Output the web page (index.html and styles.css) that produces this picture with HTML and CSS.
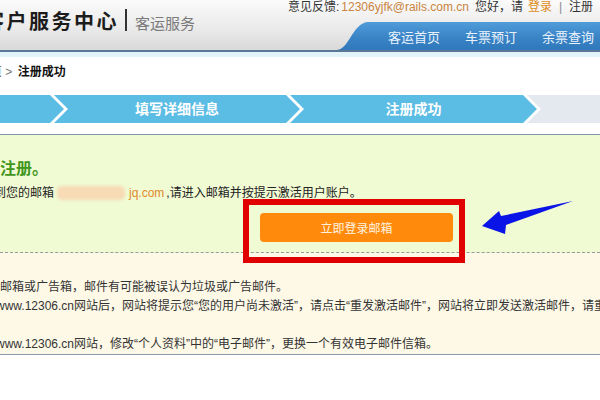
FILE: index.html
```html
<!DOCTYPE html>
<html lang="zh-CN">
<head>
    <meta charset="UTF-8">
    <meta name="viewport" content="width=device-width, initial-scale=1.0">
    <title>注册成功 - 中国铁路客户服务中心</title>
    <link rel="stylesheet" href="styles.css">
</head>
<body>
    <div class="header">
        <div class="logo">
            <span class="logo-name">客户服务中心</span>
            <span class="logo-sep"></span>
            <span class="logo-sub">客运服务</span>
        </div>
        <div class="header-right">
            <div class="top-links">
                <span>意见反馈:</span>
                <a class="mail">12306yjfk@rails.com.cn</a>
                <span>您好，请</span>
                <a class="login">登录</a>
                <span class="bar">|</span>
                <a>注册</a>
            </div>
            <ul class="nav">
                <li>客运首页</li>
                <li>车票预订</li>
                <li>余票查询</li>
                <li>列车时刻</li>
            </ul>
        </div>
    </div>
    <div class="band"></div>

    <div class="crumb"><span class="cut">页</span> <span class="gt">&gt;</span> <b>注册成功</b></div>

    <div class="steps">
        <div class="step step-first"></div>
        <div class="step step-mid">填写详细信息</div>
        <div class="step step-mid">注册成功</div>
        <div class="step step-last"></div>
    </div>

    <div class="result">
        <div class="result-top">
            <h3>注册。</h3>
            <p class="mail-line"><span class="cut-line">到您的邮箱</span><span class="blur"></span><span class="domain">jq.com</span> ,请进入邮箱并按提示激活用户账户。</p>
            <button class="go-mail">立即登录邮箱</button>
        </div>
        <div class="result-tips">
            <p class="cut-line">邮箱或广告箱，邮件有可能被误认为垃圾或广告邮件。</p>
            <p class="cut-w">www.12306.cn网站后，网站将提示您“您的用户尚未激活”，请点击“重发激活邮件”，网站将立即发送激活邮件，请重新登录邮箱激活。</p>
            <p>&nbsp;</p>
            <p class="cut-w">www.12306.cn网站，修改“个人资料”中的“电子邮件”，更换一个有效电子邮件信箱。</p>
        </div>

        <!-- red frame and arrow drawn over the page -->
        <div class="mark"></div>
        <svg class="arrow" width="100" height="42" viewBox="0 0 100 42">
            <polygon points="4,30 21,15 23,20 95,5 28,29 27,38" fill="#0a14e6"/>
        </svg>
    </div>
</body>
</html>
```

FILE: styles.css
```css
body {
    margin: 0;
    width: 600px;
    overflow: hidden;
    font-family: "Liberation Sans", "Noto Sans CJK SC", sans-serif;
    font-size: 12px;
    color: #222;
    background: #fff;
}
a {
    text-decoration: none;
}
.header {
    display: flex;
    height: 50px;
    background: linear-gradient(#fbfbfb, #e9e9e9 60%, #d9d9d9);
    border-bottom: 2px solid #5b7894;
}
.logo {
    flex: none;
    width: 288px;
    display: flex;
    align-items: center;
    height: 40px;
}
.logo-name {
    flex: none;
    margin-left: -16px;
    font-size: 20px;
    font-weight: 700;
    letter-spacing: 2.5px;
    color: #1c1c1c;
    white-space: nowrap;
}
.logo-sep {
    width: 2px;
    height: 22px;
    margin-left: 6px;
    background: #333;
}
.logo-sub {
    margin-left: 8px;
    margin-top: 4px;
    font-size: 15px;
    color: #7a7a7a;
    white-space: nowrap;
}
.header-right {
    flex: 1;
    min-width: 0;
    display: flex;
    flex-direction: column;
}
.top-links {
    display: flex;
    gap: 6px;
    line-height: 14px;
    white-space: nowrap;
    color: #333;
}
.top-links .mail {
    margin-left: -4px;
    color: #c9843e;
}
.top-links .login {
    margin-left: -1px;
    color: #e08c1a;
}
.top-links .bar {
    color: #888;
    margin: 0 1px;
}
.nav {
    display: flex;
    gap: 25px;
    list-style: none;
    margin: 8px 0 0 49px;
    padding: 4px 0 0 51px;
    height: 24px;
    line-height: 24px;
    font-size: 13px;
    color: #eaf3fc;
    white-space: nowrap;
    overflow: hidden;
    background: linear-gradient(#509cd9, #3a84c6 55%, #2f78bb);
    clip-path: path('M0 28 C 12 27, 15 3, 30 0 L 400 0 L 400 28 Z');
}
.band {
    height: 5px;
    background: #e3f3fa;
}
.crumb {
    margin-top: 8px;
    line-height: 14px;
    white-space: nowrap;
}
.crumb .cut {
    margin-left: -10px;
    color: #555;
}
.crumb .gt {
    color: #777;
}
.crumb b {
    margin-left: 2px;
    color: #111;
}
.steps {
    display: flex;
    height: 28px;
    margin-top: 16px;
    margin-left: -20px;
    background: #fff;
}
.step {
    flex: none;
    height: 28px;
    line-height: 28px;
    text-align: center;
    font-size: 14px;
    font-weight: 700;
    color: #fff;
    background: #5bbce4;
}
.step + .step {
    margin-left: -10px;
}
.step-first {
    width: 84px;
    clip-path: polygon(0 0, calc(100% - 14px) 0, 100% 50%, calc(100% - 14px) 100%, 0 100%);
}
.step-mid {
    width: 246px;
    clip-path: polygon(0 0, calc(100% - 14px) 0, 100% 50%, calc(100% - 14px) 100%, 0 100%, 14px 50%);
}
.step-mid + .step-mid {
    width: 247px;
}
.step-last {
    width: 100px;
    background: #e3e9ef;
    clip-path: polygon(0 0, 100% 0, 100% 100%, 0 100%, 14px 50%);
}
.result {
    position: relative;
    margin-top: 11px;
    border-top: 1px solid #7f95a8;
    border-bottom: 1px solid #8a9bab;
}
.result-top {
    padding: 24px 0 10px;
    background: #f0fad3;
    border-bottom: 1px dashed #9a9a9a;
}
.result-top h3 {
    margin: 0;
    font-size: 16px;
    line-height: 20px;
    color: #3f961c;
}
.mail-line {
    display: flex;
    align-items: center;
    margin: 7px 0 0;
    line-height: 14px;
    white-space: nowrap;
}
.cut-line {
    margin-left: -6px;
}
.blur {
    width: 68px;
    height: 14px;
    margin: 0 4px 0 3px;
    border-radius: 5px;
    background: #f6dbb5;
    filter: blur(1.5px);
}
.domain {
    margin-right: 2px;
    color: #e0892c;
}
.go-mail {
    display: block;
    width: 193px;
    height: 29px;
    margin: 13px 0 0 260px;
    border: none;
    border-radius: 4px;
    background: #ff8a0c;
    color: #fff3e0;
    font-family: inherit;
    font-size: 12px;
}
.result-tips {
    padding-top: 25px;
    background: #fef9e7;
    color: #333;
}
.result-tips p {
    margin: 0;
    line-height: 19px;
    white-space: nowrap;
}
.result-tips .cut-w {
    margin-left: -4px;
}
.mark {
    position: absolute;
    left: 243px;
    top: 64px;
    width: 222px;
    height: 64px;
    box-sizing: border-box;
    border: 6px solid #e00000;
}
.arrow {
    position: absolute;
    left: 478px;
    top: 61px;
}
```
